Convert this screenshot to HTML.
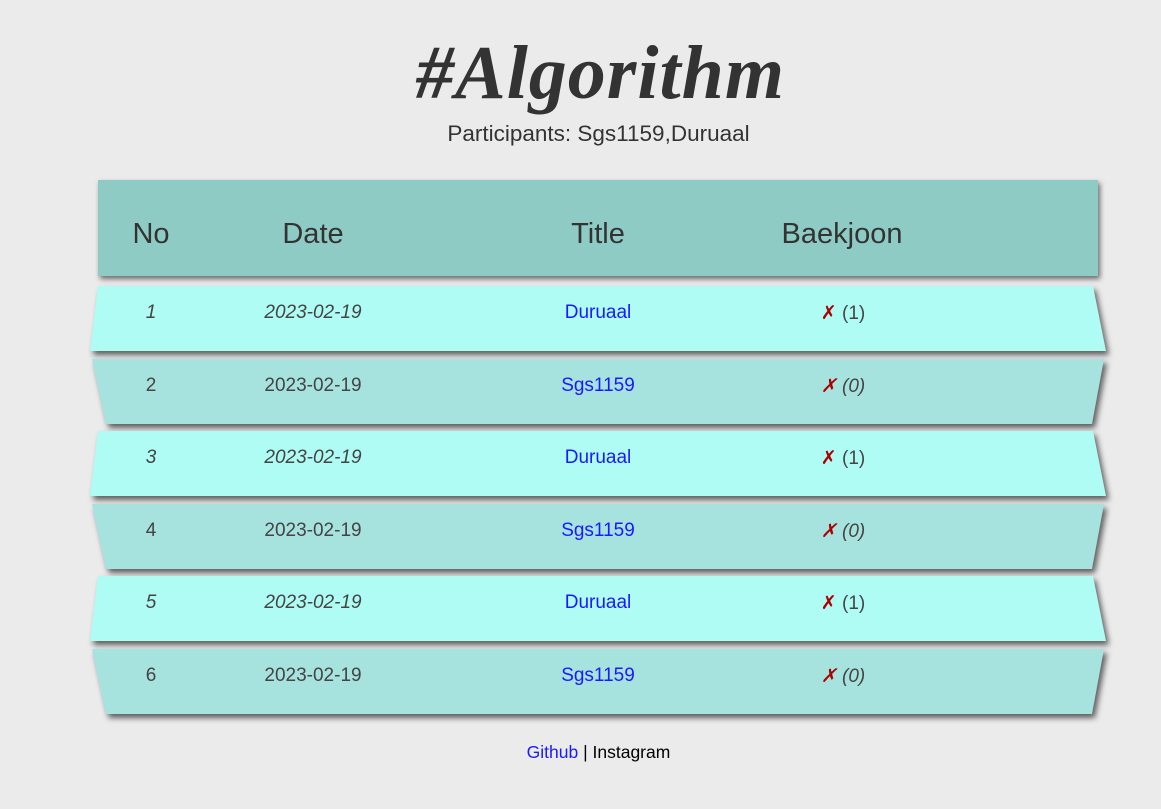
<!DOCTYPE html>
<html><head><meta charset="utf-8"><style>
body{margin:0;background:#ebebeb;font-family:"Liberation Sans",sans-serif;width:1161px;height:809px;position:relative;overflow:hidden}
h1{position:absolute;top:30px;left:20px;width:1161px;text-align:center;margin:0;font-family:"Liberation Serif",serif;font-style:italic;font-weight:bold;font-size:76px;color:#333;letter-spacing:1px}
.p{position:absolute;top:121px;left:18px;width:1161px;text-align:center;font-size:22.5px;color:#333}
.hd{position:absolute;left:98px;top:180px;width:1000px;height:96px;background:#8ecbc5;box-shadow:2px 3px 5px rgba(0,0,0,.55)}
.c{position:absolute;transform:translateX(-50%);white-space:nowrap}
.hd .c{top:38px;font-size:29px;color:#333}
.rw{position:absolute;left:0;width:1161px;height:66px;filter:drop-shadow(3px 4px 3px rgba(0,0,0,.6))}
.sh{position:absolute;inset:0}
.o .sh{background:#aefcf4;clip-path:polygon(98px 0,1093px 0,1106px 65px,90px 65px)}
.e .sh{background:#a6e2de;clip-path:polygon(92px 0,1104px 0,1092px 65px,106px 65px)}
.rw .c{top:16px;font-size:19px;color:#444}
.o .c.i{font-style:italic}
.e .c.i2{font-style:italic}
a{color:#1a1aff;text-decoration:none}
.x{color:#a00}
.ft{position:absolute;top:742px;left:18px;width:1161px;text-align:center;font-size:17.5px;color:#000}
</style></head><body>
<h1>#Algorithm</h1>
<div class="p">Participants: Sgs1159,Duruaal</div>
<div class="hd"><span class="c" style="left:53px">No</span><span class="c" style="left:215px">Date</span><span class="c" style="left:500px">Title</span><span class="c" style="left:744px">Baekjoon</span></div>

<div class="rw o" style="top:286px"><div class="sh"></div><span class="c i" style="left:151px">1</span><span class="c i" style="left:313px">2023-02-19</span><span class="c" style="left:598px"><a>Duruaal</a></span><span class="c" style="left:843px"><span class="x">✗</span> (1)</span></div>
<div class="rw e" style="top:359px"><div class="sh"></div><span class="c" style="left:151px">2</span><span class="c" style="left:313px">2023-02-19</span><span class="c" style="left:598px"><a>Sgs1159</a></span><span class="c i2" style="left:843px"><span class="x">✗</span> (0)</span></div>
<div class="rw o" style="top:431px"><div class="sh"></div><span class="c i" style="left:151px">3</span><span class="c i" style="left:313px">2023-02-19</span><span class="c" style="left:598px"><a>Duruaal</a></span><span class="c" style="left:843px"><span class="x">✗</span> (1)</span></div>
<div class="rw e" style="top:504px"><div class="sh"></div><span class="c" style="left:151px">4</span><span class="c" style="left:313px">2023-02-19</span><span class="c" style="left:598px"><a>Sgs1159</a></span><span class="c i2" style="left:843px"><span class="x">✗</span> (0)</span></div>
<div class="rw o" style="top:576px"><div class="sh"></div><span class="c i" style="left:151px">5</span><span class="c i" style="left:313px">2023-02-19</span><span class="c" style="left:598px"><a>Duruaal</a></span><span class="c" style="left:843px"><span class="x">✗</span> (1)</span></div>
<div class="rw e" style="top:649px"><div class="sh"></div><span class="c" style="left:151px">6</span><span class="c" style="left:313px">2023-02-19</span><span class="c" style="left:598px"><a>Sgs1159</a></span><span class="c i2" style="left:843px"><span class="x">✗</span> (0)</span></div>

<div class="ft"><a>Github</a> | Instagram</div>
</body></html>
